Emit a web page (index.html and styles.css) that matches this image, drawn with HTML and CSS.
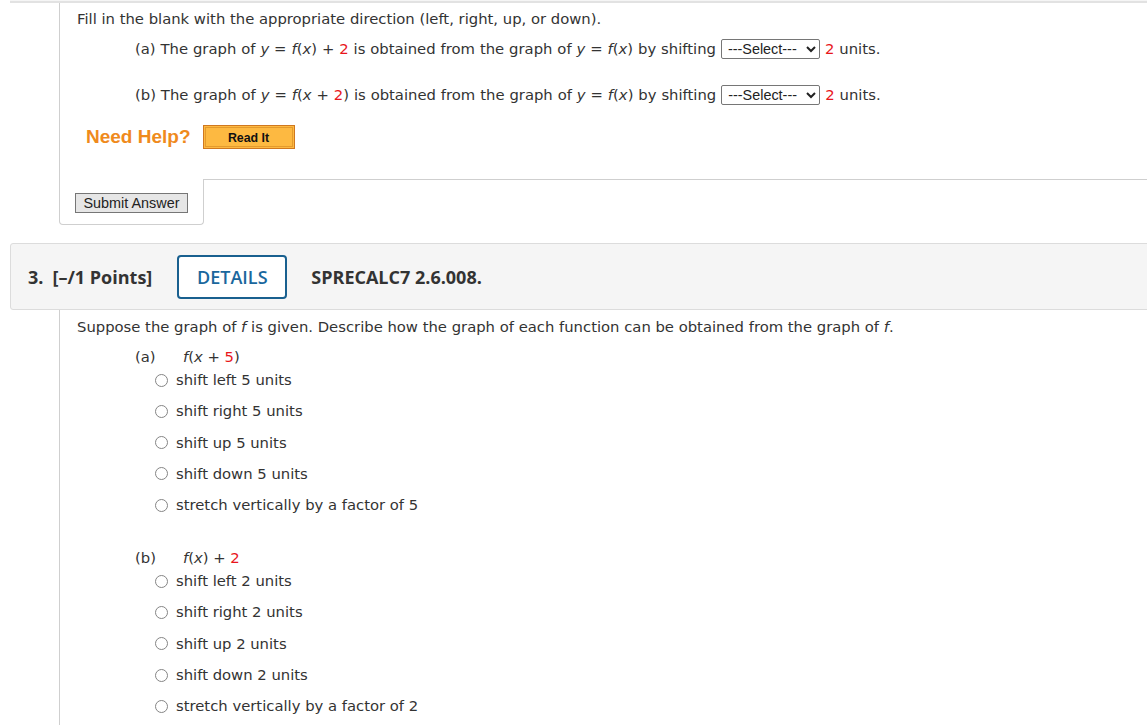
FILE: index.html
```html
<!DOCTYPE html>
<html lang="en">
<head>
  <meta charset="UTF-8" />
  <title>Question 3 - SPRECALC7 2.6.008</title>
  <link rel="stylesheet" href="styles.css">
</head>
<body>
  <div class="page">
    <div class="prev-head"></div>

    <div class="q-body first">
      <p class="prompt">Fill in the blank with the appropriate direction (left, right, up, or down).</p>

      <div class="part fill">(a) The graph of <i>y</i> = <i>f</i>(<i>x</i>) + <span class="red">2</span> is obtained from the graph of <i>y</i> = <i>f</i>(<i>x</i>) by shifting<select class="pick">
          <option>---Select---</option>
          <option>left</option>
          <option>right</option>
          <option>up</option>
          <option>down</option>
        </select><span class="red">2</span> units.</div>

      <div class="part fill second">(b) The graph of <i>y</i> = <i>f</i>(<i>x</i> + <span class="red">2</span>) is obtained from the graph of <i>y</i> = <i>f</i>(<i>x</i>) by shifting<select class="pick">
          <option>---Select---</option>
          <option>left</option>
          <option>right</option>
          <option>up</option>
          <option>down</option>
        </select><span class="red">2</span> units.</div>

      <div class="help">
        <span class="help-label">Need Help?</span>
        <button class="read-it">Read It</button>
      </div>
    </div>

    <div class="q-foot">
      <div class="submit-cell">
        <button class="submit">Submit Answer</button>
      </div>
      <div class="foot-rest"></div>
    </div>

    <div class="q-head">
      <span class="q-num">3.</span>
      <span class="q-points">[&ndash;/1 Points]</span>
      <button class="details">DETAILS</button>
      <span class="q-code">SPRECALC7 2.6.008.</span>
    </div>

    <div class="q-body second">
      <p class="prompt">Suppose the graph of <i>f</i> is given. Describe how the graph of each function can be obtained from the graph of <i>f</i>.</p>

      <div class="sub">
        <div class="sub-title"><span class="sub-letter">(a)</span><span><i>f</i>(<i>x</i> + <span class="red">5</span>)</span></div>
        <ul class="choices">
          <li><span class="radio"></span>shift left 5 units</li>
          <li><span class="radio"></span>shift right 5 units</li>
          <li><span class="radio"></span>shift up 5 units</li>
          <li><span class="radio"></span>shift down 5 units</li>
          <li><span class="radio"></span>stretch vertically by a factor of 5</li>
        </ul>
      </div>

      <div class="sub">
        <div class="sub-title"><span class="sub-letter">(b)</span><span><i>f</i>(<i>x</i>) + <span class="red">2</span></span></div>
        <ul class="choices">
          <li><span class="radio"></span>shift left 2 units</li>
          <li><span class="radio"></span>shift right 2 units</li>
          <li><span class="radio"></span>shift up 2 units</li>
          <li><span class="radio"></span>shift down 2 units</li>
          <li><span class="radio"></span>stretch vertically by a factor of 2</li>
        </ul>
      </div>
    </div>
  </div>
</body>
</html>
```

FILE: styles.css
```css
body {
  margin: 0;
  background: #fff;
  color: #333;
  font-family: 'DejaVu Sans', Verdana, sans-serif;
  font-size: 14.8px;
  overflow: hidden;
}

.page {
  margin-left: 10px;
  margin-right: -30px;
}

.prev-head {
  height: 1px;
  background: #f5f5f5;
  border-bottom: 2px solid #e2e2e2;
}

.q-body {
  margin-left: 49px;
  border-left: 1px solid #cfcfcf;
  padding-left: 17px;
  line-height: 20px;
}

.q-body.first {
  padding-top: 6px;
  padding-bottom: 30px;
}

.q-body.second {
  padding-top: 7px;
  padding-bottom: 9px;
}

.prompt {
  margin: 0;
}

.red {
  color: #e8161b;
}

.part {
  margin-left: 58px;
}

.fill {
  margin-top: 10px;
  height: 20px;
  white-space: nowrap;
  word-spacing: 0.22px;
}

.fill.second {
  margin-top: 26px;
}

.pick {
  height: 20px;
  width: 99px;
  margin: 0 5px 0 5px;
  padding: 0 0 0 2px;
  vertical-align: middle;
  position: relative;
  top: -1px;
  font-family: 'Liberation Sans', Arial, sans-serif;
  font-size: 14.4px;
  word-spacing: 0;
  color: #222;
  border: 1px solid #767676;
  border-radius: 2px;
  background: #fff;
}

.help {
  display: flex;
  align-items: center;
  gap: 12px;
  margin-top: 20px;
  margin-left: 9px;
  height: 24px;
}

.help-label {
  font-family: 'Liberation Sans', Arial, sans-serif;
  font-weight: bold;
  font-size: 19px;
  color: #ef8a1c;
}

.read-it {
  width: 92px;
  height: 24px;
  padding: 2px 0 0;
  font-family: 'Liberation Sans', Arial, sans-serif;
  font-weight: bold;
  font-size: 12.4px;
  color: #111;
  background: #fdb941;
  border: 1px solid #cf7820;
  box-shadow: inset 0 0 0 1px #fdb941, inset 0 0 0 2px #e49a2e;
  cursor: pointer;
}

.q-foot {
  display: flex;
  margin-left: 49px;
}

.submit-cell {
  width: 128px;
  padding: 14px 0 11px 15px;
  border-left: 1px solid #cfcfcf;
  border-right: 1px solid #cfcfcf;
  border-bottom: 1px solid #cfcfcf;
  border-radius: 0 0 4px 4px;
}

.submit {
  width: 113px;
  height: 20px;
  padding: 0;
  font-family: 'Liberation Sans', Arial, sans-serif;
  font-size: 14.4px;
  color: #222;
  background: #e6e6e6;
  border: 1px solid #767676;
  border-radius: 0;
  white-space: nowrap;
}

.foot-rest {
  flex: 1;
  border-top: 1px solid #cfcfcf;
}

.q-head {
  display: flex;
  align-items: center;
  height: 65px;
  margin-top: 18px;
  padding-left: 17px;
  background: #f5f5f5;
  border: 1px solid #dcdcdc;
  border-radius: 3px 0 0 3px;
  font-family: 'Open Sans', sans-serif;
  font-weight: bold;
  font-size: 18px;
  color: #333;
}

.q-num {
  margin-right: 9px;
}

.details {
  width: 110px;
  height: 44px;
  margin: 0 24px 0 25px;
  padding: 0;
  font-family: 'Open Sans', sans-serif;
  font-weight: 600;
  font-size: 18px;
  color: #1a679d;
  background: #fff;
  border: 2px solid #19608f;
  border-radius: 4px;
  cursor: pointer;
}

.sub {
  margin-left: 58px;
}

.sub-title {
  display: flex;
  margin-top: 10px;
  height: 20px;
}

.sub + .sub .sub-title {
  margin-top: 33px;
}

.sub-letter {
  width: 48px;
}

.choices {
  list-style: none;
  margin: 3px 0 0 20px;
  padding: 0;
}

.choices li {
  display: flex;
  align-items: center;
  height: 20px;
  margin-bottom: 11.3px;
}

.choices li:last-child {
  margin-bottom: 0;
}

.radio {
  width: 11px;
  height: 11px;
  border: 1px solid #858585;
  border-radius: 50%;
  margin-right: 8px;
  background: #fff;
}
```
